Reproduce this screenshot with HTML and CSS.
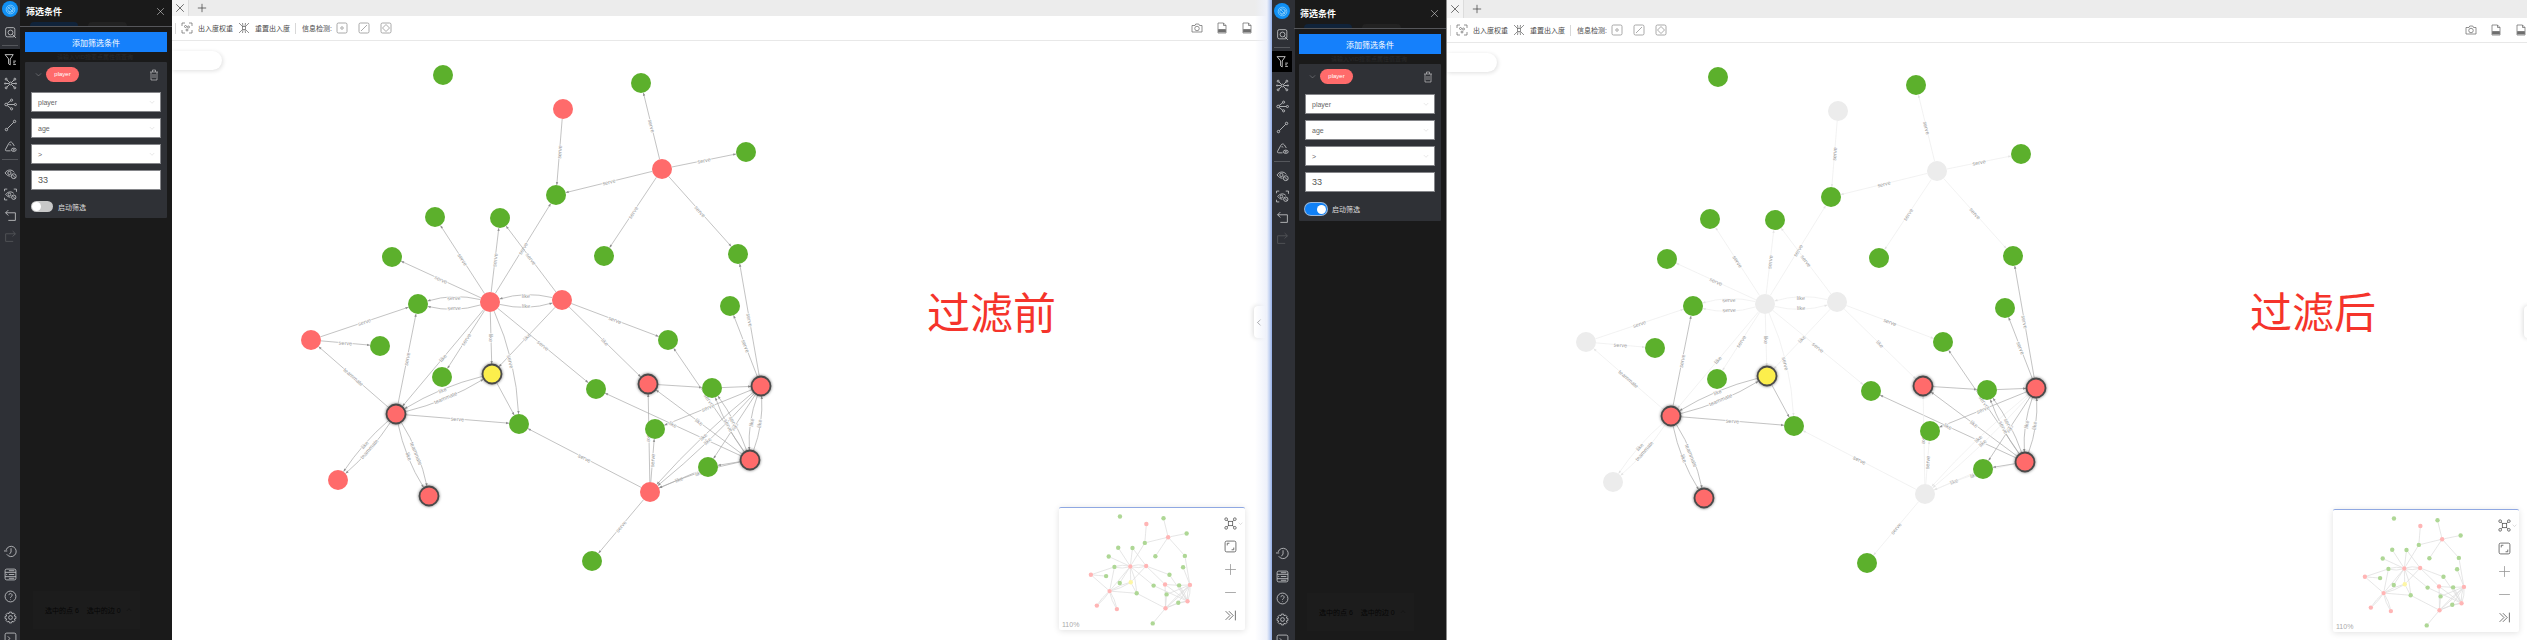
FILE: index.html
```html
<!DOCTYPE html>
<html lang="zh-CN">
  <head>
    <meta charset="utf-8">
    <meta name="viewport" content="width=device-width, initial-scale=1.0">
    <title>过滤前 / 过滤后</title>
    <link rel="stylesheet" href="styles.css">
  </head>
  <body>
    <!-- icon sprite, used by both screens -->
    <svg class="icon-defs" xmlns="http://www.w3.org/2000/svg">
      <symbol id="i-logo" viewBox="0 0 24 24"><circle cx="12" cy="12" r="8"/><circle cx="12" cy="12" r="5"/><path d="M7 7l10 10M9 17c4 0 8-4 8-8"/></symbol>
      <symbol id="i-search" viewBox="0 0 24 24"><rect x="3" y="3" width="17" height="17" rx="3"/><circle cx="12" cy="12" r="4.5"/><path d="M15.5 15.5L22 22"/></symbol>
      <symbol id="i-filter" viewBox="0 0 24 24"><path d="M2 3h15l-5.5 8v11l-3-2v-9z"/><path d="M17 15h5M17 18h3M17 21h5"/></symbol>
      <symbol id="i-network" viewBox="0 0 24 24"><circle cx="12" cy="12" r="2.5"/><circle cx="4" cy="4" r="1.8"/><circle cx="20" cy="4" r="1.8"/><circle cx="4" cy="20" r="1.8"/><circle cx="20" cy="20" r="1.8"/><circle cx="2" cy="12" r="1.2"/><circle cx="22" cy="12" r="1.2"/><path d="M5 5l5 5M19 5l-5 5M5 19l5-5M19 19l-5-5M3 12h6M15 12h6"/></symbol>
      <symbol id="i-share" viewBox="0 0 24 24"><circle cx="4" cy="12" r="2.5"/><circle cx="14" cy="4" r="2"/><circle cx="14" cy="20" r="2"/><circle cx="21" cy="12" r="2"/><path d="M6.5 12H19M6 10l6.5-5M6 14l6.5 5"/></symbol>
      <symbol id="i-link" viewBox="0 0 24 24"><circle cx="4.5" cy="19.5" r="2.2"/><circle cx="19.5" cy="4.5" r="2.2"/><path d="M6 18L18 6"/></symbol>
      <symbol id="i-tag-eye" viewBox="0 0 24 24"><path d="M3 17L9 6c1.500-3 5-3 6.500-.5L19 11M3 17c-1 2 0 3 2 3h7"/><path d="M10 9c1-1 3-.5 3 1"/><ellipse cx="18" cy="18" rx="4.500" ry="3"/><circle cx="18" cy="18" r="1"/></symbol>
      <symbol id="i-eye-off" viewBox="0 0 24 24"><path d="M2 11c4-7 13-7 17-1M2 11c3 4 6 6 10 6"/><circle cx="10" cy="11" r="3"/><circle cx="18" cy="17" r="4.500"/><path d="M15 14l6 6"/></symbol>
      <symbol id="i-eye-scan" viewBox="0 0 24 24"><path d="M3 12c4-6 12-6 15-2M3 12c3 3 5 5 9 5"/><circle cx="10" cy="12" r="2.500"/><circle cx="18" cy="17" r="4"/><path d="M15 14l6 6"/><path d="M1 6V2h5M18 2h5v5M1 18v4h5"/></symbol>
      <symbol id="i-undo" viewBox="0 0 24 24"><path d="M8 2L3 7l5 5M3 7h18v14H8"/></symbol>
      <symbol id="i-redo" viewBox="0 0 24 24"><path d="M16 2l5 5-5 5M21 7H3v14h14"/></symbol>
      <symbol id="i-history" viewBox="0 0 24 24"><path d="M4 9a9.500 9.500 0 1 1 1 8"/><path d="M0 11h6M13 6v7l-3 4"/></symbol>
      <symbol id="i-list" viewBox="0 0 24 24"><rect x="2" y="2" width="20" height="20" rx="3"/><path d="M2 8h20M2 16h20M9 12h10M5 11v2M9 5h10M9 19h10"/></symbol>
      <symbol id="i-help" viewBox="0 0 24 24"><circle cx="12" cy="12" r="10"/><path d="M9 9.500a3 3 0 1 1 4.500 2.700c-1 .6-1.500 1.200-1.500 2.300M12 17v1"/></symbol>
      <symbol id="i-gear" viewBox="0 0 24 24"><path d="M10 2h4l.8 3 2.700-1.200 2.800 2.800L19 9.300l3 .7v4l-3 .7 1.300 2.700-2.800 2.800-2.700-1.200-.8 3h-4l-.8-3-2.700 1.200-2.800-2.800L5 14.700 2 14v-4l3-.7-1.300-2.700 2.800-2.800L9.200 5z"/><circle cx="12" cy="12" r="3.500"/></symbol>
      <symbol id="i-terminal" viewBox="0 0 24 24"><rect x="2" y="2" width="20" height="20" rx="3"/><path d="M7 8l4 4-4 4M12 17h5"/></symbol>
      <symbol id="i-close" viewBox="0 0 24 24"><path d="M3 3l18 18M21 3L3 21"/></symbol>
      <symbol id="i-plus" viewBox="0 0 24 24"><path d="M12 2v20M2 12h20"/></symbol>
      <symbol id="i-minus" viewBox="0 0 24 24"><path d="M2 12h20"/></symbol>
      <symbol id="i-chevron" viewBox="0 0 24 24"><path d="M3 8l9 9 9-9"/></symbol>
      <symbol id="i-chevron-up" viewBox="0 0 24 24"><path d="M3 16l9-9 9 9"/></symbol>
      <symbol id="i-chevron-left" viewBox="0 0 24 24"><path d="M15 4l-8 8 8 8"/></symbol>
      <symbol id="i-trash" viewBox="0 0 24 24"><path d="M4 6h16M9 6V2h6v4M6 6v16h12V6M10 10v8M14 10v8"/></symbol>
      <symbol id="i-focus" viewBox="0 0 24 24"><path d="M2 8V2h6M16 2h6v6M22 16v6h-6M8 22H2v-6"/><circle cx="9" cy="9" r="2"/><circle cx="15" cy="10" r="2"/><circle cx="12" cy="16" r="2"/></symbol>
      <symbol id="i-reset" viewBox="0 0 24 24"><path d="M2 2l7 7M22 2l-7 7M2 22l7-7M22 22l-7-7M9 2l1 7M15 2l-1 7M9 22l1-7M15 22l-1-7"/><rect x="9" y="9" width="6" height="6"/></symbol>
      <symbol id="i-info-node" viewBox="0 0 24 24"><rect x="2" y="2" width="20" height="20" rx="3"/><circle cx="12" cy="12" r="2.500"/></symbol>
      <symbol id="i-info-edge" viewBox="0 0 24 24"><rect x="2" y="2" width="20" height="20" rx="3"/><path d="M6 18L18 6"/></symbol>
      <symbol id="i-info-group" viewBox="0 0 24 24"><rect x="2" y="2" width="20" height="20" rx="3"/><path d="M12 5l7 7-7 7-7-7z"/></symbol>
      <symbol id="i-camera" viewBox="0 0 24 24"><path d="M2 7h6l1.500-3h6L17 7h5v13H2z"/><circle cx="12" cy="13" r="4.500"/></symbol>
      <symbol id="i-doc" viewBox="0 0 24 24"><path d="M4 2h11l5 5v15H4zM15 2v5h5"/><path class="icon-solid" d="M5 15h14v5H5z"/></symbol>
      <symbol id="i-layout" viewBox="0 0 24 24"><rect x="8" y="8" width="8" height="8"/><circle cx="4" cy="4" r="2.500"/><circle cx="20" cy="4" r="2.500"/><circle cx="4" cy="20" r="2.500"/><circle cx="20" cy="20" r="2.500"/><path d="M6 6l2 2M18 6l-2 2M6 18l2-2M18 18l-2-2"/></symbol>
      <symbol id="i-fit" viewBox="0 0 24 24"><rect x="2" y="2" width="20" height="20" rx="3"/><path d="M6 10V6h4M18 14v4h-4"/></symbol>
      <symbol id="i-collapse" viewBox="0 0 24 24"><path d="M3 4l8 8-8 8M9 4l8 8-8 8M21 3v18"/></symbol>
    </svg>

    <div class="screens">
      <!-- before filtering -->
      <section class="screen screen-before">
        <nav class="rail">
          <span class="rail-logo"><svg class="icon"><use href="#i-logo"/></svg></span>
          <a class="rail-item"><svg class="icon"><use href="#i-search"/></svg></a>
          <hr class="rail-sep">
          <a class="rail-item rail-active"><svg class="icon"><use href="#i-filter"/></svg></a>
          <a class="rail-item"><svg class="icon"><use href="#i-network"/></svg></a>
          <a class="rail-item"><svg class="icon"><use href="#i-share"/></svg></a>
          <a class="rail-item"><svg class="icon"><use href="#i-link"/></svg></a>
          <a class="rail-item"><svg class="icon"><use href="#i-tag-eye"/></svg></a>
          <hr class="rail-sep">
          <a class="rail-item"><svg class="icon"><use href="#i-eye-off"/></svg></a>
          <a class="rail-item"><svg class="icon"><use href="#i-eye-scan"/></svg></a>
          <a class="rail-item"><svg class="icon"><use href="#i-undo"/></svg></a>
          <a class="rail-item rail-dim"><svg class="icon"><use href="#i-redo"/></svg></a>
          <div class="rail-bottom">
            <a class="rail-item"><svg class="icon"><use href="#i-history"/></svg></a>
            <a class="rail-item rail-list"><svg class="icon"><use href="#i-list"/></svg></a>
            <a class="rail-item"><svg class="icon"><use href="#i-help"/></svg></a>
            <a class="rail-item"><svg class="icon"><use href="#i-gear"/></svg></a>
            <a class="rail-item"><svg class="icon"><use href="#i-terminal"/></svg></a>
          </div>
        </nav>
        <aside class="panel">
          <div class="panel-head">
            <span class="panel-title">筛选条件</span>
            <svg class="icon icon-close"><use href="#i-close"/></svg>
            <i class="ghost-tab ghost-tab-first"></i>
            <i class="ghost-tab ghost-tab-second"></i>
          </div>
          <button class="add-btn">添加筛选条件</button>
          <div class="ghost-search">请输入VID搜索点属性值查询</div>
          <div class="filter-card">
            <div class="filter-head">
              <span class="filter-toggle"><svg class="icon icon-xs"><use href="#i-chevron"/></svg></span>
              <span class="tag-pill">player</span>
              <svg class="icon icon-trash"><use href="#i-trash"/></svg>
            </div>
            <div class="field"><span>player</span><svg class="icon icon-xs"><use href="#i-chevron"/></svg></div>
            <div class="field"><span>age</span><svg class="icon icon-xs"><use href="#i-chevron"/></svg></div>
            <div class="field"><span>&gt;</span><svg class="icon icon-xs"><use href="#i-chevron"/></svg></div>
            <div class="field field-input"><span>33</span></div>
            <div class="switch-row">
              <span class="switch"><span class="switch-knob"></span></span>
              <span>启动筛选</span>
            </div>
          </div>
          <div class="selected-bar">
            <span>选中的点 6</span><span>选中的边 0</span>
            <svg class="icon icon-xs"><use href="#i-chevron-up"/></svg>
          </div>
        </aside>
        <main class="main">
          <div class="tab-strip">
            <div class="tab"><svg class="icon icon-tab"><use href="#i-close"/></svg></div>
            <div class="tab-add"><svg class="icon icon-tab"><use href="#i-plus"/></svg></div>
          </div>
          <div class="toolbar">
            <i class="tool-sep"></i>
            <svg class="icon tool-icon tool-first"><use href="#i-focus"/></svg>
            <span class="tool-text">出入度权重</span>
            <svg class="icon tool-icon"><use href="#i-reset"/></svg>
            <span class="tool-text">重置出入度</span>
            <i class="tool-sep"></i>
            <span class="tool-text tool-label">信息检测:</span>
            <svg class="icon tool-icon tool-box"><use href="#i-info-node"/></svg>
            <svg class="icon tool-icon tool-box"><use href="#i-info-edge"/></svg>
            <svg class="icon tool-icon tool-box"><use href="#i-info-group"/></svg>
            <div class="tool-right">
              <svg class="icon tool-icon"><use href="#i-camera"/></svg>
              <svg class="icon tool-icon"><use href="#i-doc"/></svg>
              <svg class="icon tool-icon"><use href="#i-doc"/></svg>
            </div>
          </div>
          <svg class="graph-canvas" data-graph="before" viewBox="172 0 1100 640"></svg>
          <div class="search-pill"></div>
          <div class="caption">过滤前</div>
          <div class="minimap">
            <svg class="minimap-graph" data-graph="mini" viewBox="0 0 186 123"></svg>
            <span class="minimap-zoom">110%</span>
            <div class="minimap-tools">
              <span class="minimap-layout"><svg class="icon"><use href="#i-layout"/></svg><svg class="icon icon-tiny"><use href="#i-chevron"/></svg></span>
              <svg class="icon"><use href="#i-fit"/></svg>
              <svg class="icon minimap-soft"><use href="#i-plus"/></svg>
              <svg class="icon minimap-soft"><use href="#i-minus"/></svg>
              <svg class="icon"><use href="#i-collapse"/></svg>
            </div>
          </div>
          <div class="collapse-tab"><svg class="icon icon-xs"><use href="#i-chevron-left"/></svg></div>
          <div class="screen-edge"></div>
        </main>
      </section>

      <!-- after filtering -->
      <section class="screen screen-after">
        <nav class="rail">
          <span class="rail-logo"><svg class="icon"><use href="#i-logo"/></svg></span>
          <a class="rail-item"><svg class="icon"><use href="#i-search"/></svg></a>
          <hr class="rail-sep">
          <a class="rail-item rail-active"><svg class="icon"><use href="#i-filter"/></svg></a>
          <a class="rail-item"><svg class="icon"><use href="#i-network"/></svg></a>
          <a class="rail-item"><svg class="icon"><use href="#i-share"/></svg></a>
          <a class="rail-item"><svg class="icon"><use href="#i-link"/></svg></a>
          <a class="rail-item"><svg class="icon"><use href="#i-tag-eye"/></svg></a>
          <hr class="rail-sep">
          <a class="rail-item"><svg class="icon"><use href="#i-eye-off"/></svg></a>
          <a class="rail-item"><svg class="icon"><use href="#i-eye-scan"/></svg></a>
          <a class="rail-item"><svg class="icon"><use href="#i-undo"/></svg></a>
          <a class="rail-item rail-dim"><svg class="icon"><use href="#i-redo"/></svg></a>
          <div class="rail-bottom">
            <a class="rail-item"><svg class="icon"><use href="#i-history"/></svg></a>
            <a class="rail-item rail-list"><svg class="icon"><use href="#i-list"/></svg></a>
            <a class="rail-item"><svg class="icon"><use href="#i-help"/></svg></a>
            <a class="rail-item"><svg class="icon"><use href="#i-gear"/></svg></a>
            <a class="rail-item"><svg class="icon"><use href="#i-terminal"/></svg></a>
          </div>
        </nav>
        <aside class="panel">
          <div class="panel-head">
            <span class="panel-title">筛选条件</span>
            <svg class="icon icon-close"><use href="#i-close"/></svg>
            <i class="ghost-tab ghost-tab-first"></i>
            <i class="ghost-tab ghost-tab-second"></i>
          </div>
          <button class="add-btn">添加筛选条件</button>
          <div class="ghost-search">请输入VID搜索点属性值查询</div>
          <div class="filter-card">
            <div class="filter-head">
              <span class="filter-toggle"><svg class="icon icon-xs"><use href="#i-chevron"/></svg></span>
              <span class="tag-pill">player</span>
              <svg class="icon icon-trash"><use href="#i-trash"/></svg>
            </div>
            <div class="field"><span>player</span><svg class="icon icon-xs"><use href="#i-chevron"/></svg></div>
            <div class="field"><span>age</span><svg class="icon icon-xs"><use href="#i-chevron"/></svg></div>
            <div class="field"><span>&gt;</span><svg class="icon icon-xs"><use href="#i-chevron"/></svg></div>
            <div class="field field-input"><span>33</span></div>
            <div class="switch-row">
              <span class="switch switch-on"><span class="switch-knob"></span></span>
              <span>启动筛选</span>
            </div>
          </div>
          <div class="selected-bar">
            <span>选中的点 6</span><span>选中的边 0</span>
            <svg class="icon icon-xs"><use href="#i-chevron-up"/></svg>
          </div>
        </aside>
        <main class="main">
          <div class="tab-strip">
            <div class="tab"><svg class="icon icon-tab"><use href="#i-close"/></svg></div>
            <div class="tab-add"><svg class="icon icon-tab"><use href="#i-plus"/></svg></div>
          </div>
          <div class="toolbar">
            <i class="tool-sep"></i>
            <svg class="icon tool-icon tool-first"><use href="#i-focus"/></svg>
            <span class="tool-text">出入度权重</span>
            <svg class="icon tool-icon"><use href="#i-reset"/></svg>
            <span class="tool-text">重置出入度</span>
            <i class="tool-sep"></i>
            <span class="tool-text tool-label">信息检测:</span>
            <svg class="icon tool-icon tool-box"><use href="#i-info-node"/></svg>
            <svg class="icon tool-icon tool-box"><use href="#i-info-edge"/></svg>
            <svg class="icon tool-icon tool-box"><use href="#i-info-group"/></svg>
            <div class="tool-right">
              <svg class="icon tool-icon"><use href="#i-camera"/></svg>
              <svg class="icon tool-icon"><use href="#i-doc"/></svg>
              <svg class="icon tool-icon"><use href="#i-doc"/></svg>
            </div>
          </div>
          <svg class="graph-canvas" data-graph="after" viewBox="1447 0 1080 640"></svg>
          <div class="search-pill"></div>
          <div class="caption">过滤后</div>
          <div class="minimap">
            <svg class="minimap-graph" data-graph="mini" viewBox="0 0 186 123"></svg>
            <span class="minimap-zoom">110%</span>
            <div class="minimap-tools">
              <span class="minimap-layout"><svg class="icon"><use href="#i-layout"/></svg><svg class="icon icon-tiny"><use href="#i-chevron"/></svg></span>
              <svg class="icon"><use href="#i-fit"/></svg>
              <svg class="icon minimap-soft"><use href="#i-plus"/></svg>
              <svg class="icon minimap-soft"><use href="#i-minus"/></svg>
              <svg class="icon"><use href="#i-collapse"/></svg>
            </div>
          </div>
          <div class="collapse-tab"></div>
        </main>
      </section>
    </div>
    <script src="graph.js"></script>
  </body>
</html>
```

FILE: styles.css
```css
* {
  box-sizing: border-box;
}

body {
  margin: 0;
  background-color: #fff;
  font-family: 'Liberation Sans', 'Noto Sans CJK SC', sans-serif;
  overflow: hidden;
}

.icon-defs {
  display: none;
}

.icon {
  display: block;
  width: 13px;
  height: 13px;
  fill: none;
  stroke: currentColor;
  stroke-width: 1.5;
  flex-shrink: 0;
}

.icon-solid {
  fill: currentColor;
}

.icon-xs {
  width: 7px;
  height: 7px;
  color: #a5a6a8;
}

.screens {
  display: flex;
  width: 2527px;
  height: 640px;
  overflow: hidden;
}

.screen {
  display: flex;
  height: 640px;
  overflow: hidden;
}

.screen-before {
  width: 1272px;
}

.screen-after {
  width: 1255px;
}

/* left rail */
.rail {
  display: flex;
  flex-direction: column;
  align-items: center;
  flex-shrink: 0;
  width: 20px;
  height: 640px;
  background-color: #2e3036;
  color: #c9cacc;
}

.screen-after .rail {
  width: 23px;
  padding: 2px 3px 0 0;
}

.rail-logo {
  display: flex;
  align-items: center;
  justify-content: center;
  flex-shrink: 0;
  width: 16px;
  height: 16px;
  margin: 1px 0 5px;
  border-radius: 50%;
  background-color: #1090f5;
  color: #8fd0fa;
}

.rail-item {
  display: flex;
  align-items: center;
  justify-content: center;
  flex-shrink: 0;
  width: 100%;
  height: 21px;
}

.rail-sep {
  flex-shrink: 0;
  width: 16px;
  height: 1px;
  margin: 2px 0 3px;
  border: 0;
  background-color: #55575c;
}

.rail-active {
  margin-bottom: 3px;
  background-color: #000;
  color: #e8e8e8;
}

.rail-dim {
  color: #56585d;
}

.rail-bottom {
  display: flex;
  flex-direction: column;
  flex-shrink: 0;
  width: 100%;
  margin-top: auto;
  margin-bottom: -9px;
}

.screen-after .rail-bottom {
  margin-bottom: -11px;
}

.rail-list {
  height: 24px;
}

.rail-list + .rail-item {
  height: 21px;
}

/* filter panel */
.panel {
  display: flex;
  flex-direction: column;
  flex-shrink: 0;
  width: 152px;
  height: 640px;
  padding: 0 5px;
  background-color: #1a1a1a;
  color: #fff;
}

.screen-after .panel {
  width: 152px;
  padding: 2px 5px 0 4px;
  border-right: 1px solid #8c8c8c;
}

.panel-head {
  position: relative;
  display: flex;
  align-items: center;
  justify-content: space-between;
  height: 27px;
  margin: 0 -5px;
  padding: 0 7px 4px 6px;
  border-bottom: 1px solid #55565a;
}

.panel-title {
  font-size: 9px;
  font-weight: bold;
}

.icon-close {
  width: 9px;
  height: 9px;
  color: #ddd;
}

/* tabs of the page under the panel, only just showing through */
.ghost-tab {
  position: absolute;
  bottom: 0;
  height: 4px;
  border-radius: 4px 4px 0 0;
}

.ghost-tab-first {
  left: 10px;
  width: 48px;
  background-color: #10233a;
}

.ghost-tab-second {
  left: 68px;
  width: 39px;
  background-color: #222;
}

.add-btn {
  display: block;
  flex-shrink: 0;
  height: 20px;
  margin-top: 5px;
  padding: 0;
  border: 0;
  background-color: #1580fb;
  color: #fff;
  font-family: inherit;
  font-size: 8px;
}

.ghost-search {
  height: 10px;
  padding-left: 32px;
  overflow: hidden;
  color: #2a2a2a;
  font-size: 6px;
  line-height: 10px;
  white-space: nowrap;
}

.filter-card {
  padding: 5px 6px 6px;
  border-radius: 1px;
  background-color: #2f3136;
}

.filter-head {
  display: flex;
  align-items: center;
  height: 15px;
  margin-bottom: 10px;
}

.filter-toggle {
  display: flex;
  align-items: center;
  justify-content: center;
  width: 15px;
}

.tag-pill {
  width: 33px;
  height: 15px;
  border-radius: 8px;
  background-color: #ff6b6b;
  color: #fff;
  font-size: 6px;
  line-height: 15px;
  text-align: center;
}

.icon-trash {
  width: 12px;
  height: 12px;
  margin-left: auto;
  margin-right: 1px;
  color: #b5b6b8;
}

.field {
  display: flex;
  align-items: center;
  justify-content: space-between;
  height: 20px;
  margin-bottom: 6px;
  padding: 0 5px 0 6px;
  border: 1px solid #85868a;
  background-color: #fff;
  color: #666;
  font-size: 7px;
}

.field .icon-xs {
  width: 6px;
  height: 6px;
  color: #c4c4c4;
}

.field-input {
  margin-bottom: 0;
  color: #555;
  font-size: 9px;
}

.switch-row {
  display: flex;
  align-items: center;
  gap: 5px;
  margin-top: 11px;
  color: #ddd;
  font-size: 7px;
}

.switch {
  display: flex;
  align-items: center;
  width: 22px;
  height: 11px;
  padding: 1px;
  border-radius: 6px;
  background-color: #c8c8c8;
}

.switch-knob {
  width: 9px;
  height: 9px;
  border-radius: 50%;
  background-color: #fff;
}

.switch-on {
  justify-content: flex-end;
  height: 12px;
  background-color: #1080f5;
  box-shadow: 0 0 0 1px #9ab8dc;
}

.selected-bar {
  display: flex;
  align-items: center;
  gap: 8px;
  width: 107px;
  height: 38px;
  margin-top: auto;
  margin-bottom: 11px;
  margin-left: 8px;
  padding-left: 12px;
  background-color: #1c1c1c;
  color: #060606;
  font-size: 7px;
}

.selected-bar .icon-xs {
  margin-left: -3px;
  width: 6px;
  height: 6px;
  color: #0a0a0a;
}

.screen-after .selected-bar {
  margin-bottom: 9px;
}

/* main area */
.main {
  position: relative;
  flex: 1;
  min-width: 0;
  height: 640px;
  background-color: #fff;
}

.tab-strip {
  display: flex;
  height: 16px;
  background-color: #ececec;
}

.screen-after .tab-strip {
  height: 18px;
}

.tab {
  display: flex;
  align-items: center;
  justify-content: center;
  width: 17px;
  background-color: #f4f4f4;
  border-right: 1px solid #dcdcdc;
}

.tab-add {
  display: flex;
  align-items: center;
  justify-content: center;
  width: 26px;
}

.icon-tab {
  width: 10px;
  height: 10px;
  stroke-width: 1.8;
  color: #444;
}

.toolbar {
  display: flex;
  align-items: center;
  height: 25px;
  padding-left: 3px;
  border-bottom: 1px solid #e8e8e8;
  color: #555;
}

.tool-sep {
  width: 1px;
  height: 11px;
  margin-right: 5px;
  background-color: #d8d8d8;
}

.tool-icon {
  width: 12px;
  height: 12px;
  stroke-width: 1.5;
  color: #6e6e6e;
}

.tool-first {
  margin-left: 0;
}

.tool-text {
  margin: 0 5px;
  color: #4a4a4a;
  font-size: 7px;
  white-space: nowrap;
}

.tool-label {
  margin: 0 4px 0 1px;
}

.tool-box {
  margin-right: 10px;
  color: #8e8e8e;
}

.tool-right {
  display: flex;
  gap: 13px;
  margin-left: auto;
  padding-right: 19px;
}

.screen-after .tool-right {
  padding-right: 0;
}

.graph-canvas {
  position: absolute;
  top: 0;
  left: 0;
  width: 100%;
  height: 100%;
}

.search-pill {
  position: absolute;
  top: 51px;
  left: 0;
  width: 50px;
  height: 19px;
  border-radius: 0 10px 10px 0;
  background-color: #fff;
  box-shadow: 1px 1px 4px rgba(0, 0, 0, 0.13);
}

.screen-after .search-pill {
  top: 53px;
}

.caption {
  position: absolute;
  top: 284px;
  left: 755px;
  color: #f5342b;
  font-size: 43px;
  line-height: 60px;
  white-space: nowrap;
}

.screen-after .caption {
  left: 803px;
  font-size: 42px;
}

.minimap {
  position: absolute;
  right: 27px;
  bottom: 10px;
  width: 186px;
  height: 123px;
  border-top: 1px solid #8fa8e2;
  border-radius: 2px;
  background-color: #fff;
  box-shadow: 0 1px 6px rgba(0, 0, 0, 0.12);
}

.screen-after .minimap {
  right: 8px;
  bottom: 8px;
}

.minimap-graph {
  display: block;
  width: 186px;
  height: 123px;
}

.minimap-zoom {
  position: absolute;
  left: 3px;
  bottom: 2px;
  color: #aaa;
  font-size: 7px;
}

.minimap-tools {
  position: absolute;
  top: 9px;
  left: 165px;
  display: flex;
  flex-direction: column;
  gap: 10px;
  color: #555;
}

.minimap-layout {
  display: flex;
  align-items: center;
  width: 13px;
}

.icon-tiny {
  width: 5px;
  height: 5px;
  margin-left: 1px;
  color: #999;
}

.minimap-soft {
  color: #999;
}

.collapse-tab {
  position: absolute;
  top: 306px;
  right: 7px;
  display: flex;
  align-items: center;
  justify-content: center;
  width: 11px;
  height: 32px;
  border-radius: 4px 0 0 4px;
  background-color: #fff;
  box-shadow: -1px 0 5px rgba(0, 0, 0, 0.14);
}

.collapse-tab .icon-xs {
  width: 9px;
  height: 9px;
  color: #333;
}

.screen-after .collapse-tab {
  right: -8px;
}

.screen-edge {
  position: absolute;
  top: 0;
  right: 0;
  width: 17px;
  height: 640px;
  background: linear-gradient(to right, rgba(240, 243, 250, 0), #eef1fa 70%, #c5d4f2 85%, #94aee6);
}

/* graph drawing */
.edge {
  fill: none;
  stroke: #a9a9a9;
  stroke-width: 0.7;
}

.edge-faded {
  stroke: #ececec;
}

.arrow {
  fill: #8f8f8f;
}

.arrow-faded {
  fill: #e4e4e4;
}

.edge-label {
  fill: #9a9a9a;
  stroke: #fff;
  stroke-width: 1.5;
  paint-order: stroke;
  font-family: 'Liberation Sans', sans-serif;
  font-size: 5.5px;
  text-anchor: middle;
  dominant-baseline: central;
}

.node-g {
  fill: #5cb02c;
}

.node-r,
.node-s {
  fill: #ff6b6b;
}

.node-y {
  fill: #fcee4c;
}

.node-faded {
  fill: #ececec;
}

.node-ring {
  stroke: #4a4a4a;
  stroke-width: 1.8;
  filter: drop-shadow(0 0 1.5px rgba(0, 0, 0, 0.55));
}

.minimap-graph .edge {
  stroke: #dcdcdc;
  stroke-width: 3.2;
}

.minimap-graph .node-g {
  fill: #aed795;
}

.minimap-graph .node-r,
.minimap-graph .node-s {
  fill: #ffb5b5;
}

.minimap-graph .node-y {
  fill: #fdf6a5;
}
```

FILE: graph.js
```js
// node positions are in the coordinates of the "before" picture
var nodes = {
  g1: [443, 75], g2: [641, 83], g3: [746, 152], g4: [556, 195], g5: [435, 217],
  g6: [500, 218], g7: [392, 257], g8: [604, 256], g9: [738, 254], g10: [418, 304],
  g11: [730, 306], g12: [668, 340], g13: [380, 346], g14: [442, 377], g15: [596, 389],
  g16: [712, 388], g17: [519, 424], g18: [655, 429], g19: [708, 467], g20: [592, 561],
  r1: [563, 109], r2: [662, 169], r3: [490, 302], r4: [562, 300], r5: [311, 340],
  r6: [338, 480], r7: [650, 492],
  s1: [396, 414], s2: [429, 496], s3: [648, 384], s4: [761, 386], s5: [750, 460],
  y1: [492, 374]
};

// from, to, label, curve
var edges = [
  ['r1', 'g4', 'serve'], ['r2', 'g2', 'serve'], ['r2', 'g3', 'serve'], ['r2', 'g4', 'serve'],
  ['r2', 'g8', 'serve'], ['r2', 'g9', 'serve'], ['s4', 'g9', 'serve'], ['s4', 'g11', 'serve'],
  ['r3', 'g4', 'serve'], ['r3', 'g5', 'serve'], ['r3', 'g6', 'serve'], ['r3', 'g7', 'serve'],
  ['r3', 'g10', 'serve', 5], ['r3', 'g10', 'serve', -5], ['r3', 'r4', 'like', 5], ['r4', 'r3', 'like', 5],
  ['r4', 'g6', 'serve'], ['r4', 'g12', 'serve'], ['r4', 's3', 'like'], ['r4', 'y1', 'like'],
  ['r5', 'g10', 'serve'], ['r5', 'g13', 'serve'], ['s1', 'r5', 'teammate'], ['s1', 'g10', 'serve'],
  ['r3', 's1', 'like'], ['r3', 'g14', 'serve'], ['r3', 'y1', 'like'], ['r3', 'g17', 'serve', -6],
  ['y1', 'g17', ''], ['r3', 'g15', 'serve'], ['s1', 'y1', 'teammate', 4], ['y1', 's1', 'like', 4],
  ['s1', 'g17', 'serve'], ['s1', 'r6', 'like', 3], ['s1', 'r6', 'teammate', -3],
  ['s1', 's2', 'like', 4], ['s1', 's2', 'teammate', -4], ['s3', 'g16', ''], ['g16', 's4', ''],
  ['s5', 'g12', 'serve'], ['s4', 'g18', 'serve'], ['s5', 'g15', 'like'], ['s5', 's3', 'like'],
  ['r7', 's3', 'like'], ['r7', 'g18', 'serve'], ['r7', 'g17', 'serve'], ['r7', 'g20', 'serve'],
  ['s4', 'r7', 'like', 3], ['s4', 'r7', 'like', -3], ['s4', 's5', 'like', 4], ['s5', 's4', 'like', 4],
  ['s4', 'g19', 'like'], ['s5', 'g16', 'serve', 3], ['s5', 'g16', 'serve', -3],
  ['g19', 'r7', 'like'], ['s5', 'r7', 'like', 3], ['s5', 'g19', '']
];

var SVG_NS = 'http://www.w3.org/2000/svg';

function el(parent, tag, attrs) {
  var node = document.createElementNS(SVG_NS, tag);
  for (var key in attrs) node.setAttribute(key, attrs[key]);
  parent.appendChild(node);
  return node;
}

function isFiltered(name) {
  return name.charAt(0) === 'r';
}

function drawEdge(group, edge, opts) {
  var a = nodes[edge[0]], b = nodes[edge[1]];
  var dx = b[0] - a[0], dy = b[1] - a[1], len = Math.hypot(dx, dy);
  var curve = edge[3] || 0;
  // control point of the curve, sits off the middle of the line
  var cx = (a[0] + b[0]) / 2 - dy / len * curve * 2;
  var cy = (a[1] + b[1]) / 2 + dx / len * curve * 2;
  var la = Math.hypot(cx - a[0], cy - a[1]), lb = Math.hypot(cx - b[0], cy - b[1]);
  var sx = a[0] + (cx - a[0]) / la * 10, sy = a[1] + (cy - a[1]) / la * 10;
  var ux = (b[0] - cx) / lb, uy = (b[1] - cy) / lb;
  var ex = b[0] - ux * 10, ey = b[1] - uy * 10;
  var faded = opts.filter && (isFiltered(edge[0]) || isFiltered(edge[1]));

  el(group, 'path', {
    'class': faded ? 'edge edge-faded' : 'edge',
    d: 'M' + sx + ' ' + sy + 'Q' + cx + ' ' + cy + ' ' + ex + ' ' + ey
  });
  if (!opts.labels) return;

  el(group, 'polygon', {
    'class': faded ? 'arrow arrow-faded' : 'arrow',
    points: [ex, ey, ex - ux * 3 - uy * 1.2, ey - uy * 3 + ux * 1.2, ex - ux * 3 + uy * 1.2, ey - uy * 3 - ux * 1.2].join(' ')
  });

  if (edge[2]) {
    var lx = (a[0] + b[0]) / 2 - dy / len * curve;
    var ly = (a[1] + b[1]) / 2 + dx / len * curve;
    var angle = Math.atan2(dy, dx) * 180 / Math.PI;
    if (angle > 90) angle -= 180;
    if (angle < -90) angle += 180;
    var label = el(group, 'text', {
      'class': 'edge-label',
      x: lx,
      y: ly,
      transform: 'rotate(' + angle + ' ' + lx + ' ' + ly + ')'
    });
    label.textContent = edge[2];
  }
}

function drawNode(group, name, opts) {
  var type = name.charAt(0);
  var ring = type === 's' || type === 'y';
  var cls = 'node-' + type;
  if (opts.filter && isFiltered(name)) cls += ' node-faded';
  if (ring && opts.labels) cls += ' node-ring';
  el(group, 'circle', {
    'class': cls,
    cx: nodes[name][0],
    cy: nodes[name][1],
    r: ring && opts.labels ? 9.5 : 10
  });
}

function drawGraph(svg, transform, opts) {
  var group = el(svg, 'g', { transform: transform });
  edges.forEach(function (edge) { drawEdge(group, edge, opts); });
  Object.keys(nodes).forEach(function (name) { drawNode(group, name, opts); });
}

drawGraph(document.querySelector('[data-graph="before"]'), '', { labels: true });
// the right hand picture sits one screen over and 2px lower
drawGraph(document.querySelector('[data-graph="after"]'), 'translate(1275 2)', { labels: true, filter: true });
document.querySelectorAll('[data-graph="mini"]').forEach(function (svg) {
  drawGraph(svg, 'matrix(0.22 0 0 0.22 -36.5 -8)', { labels: false });
});
```
